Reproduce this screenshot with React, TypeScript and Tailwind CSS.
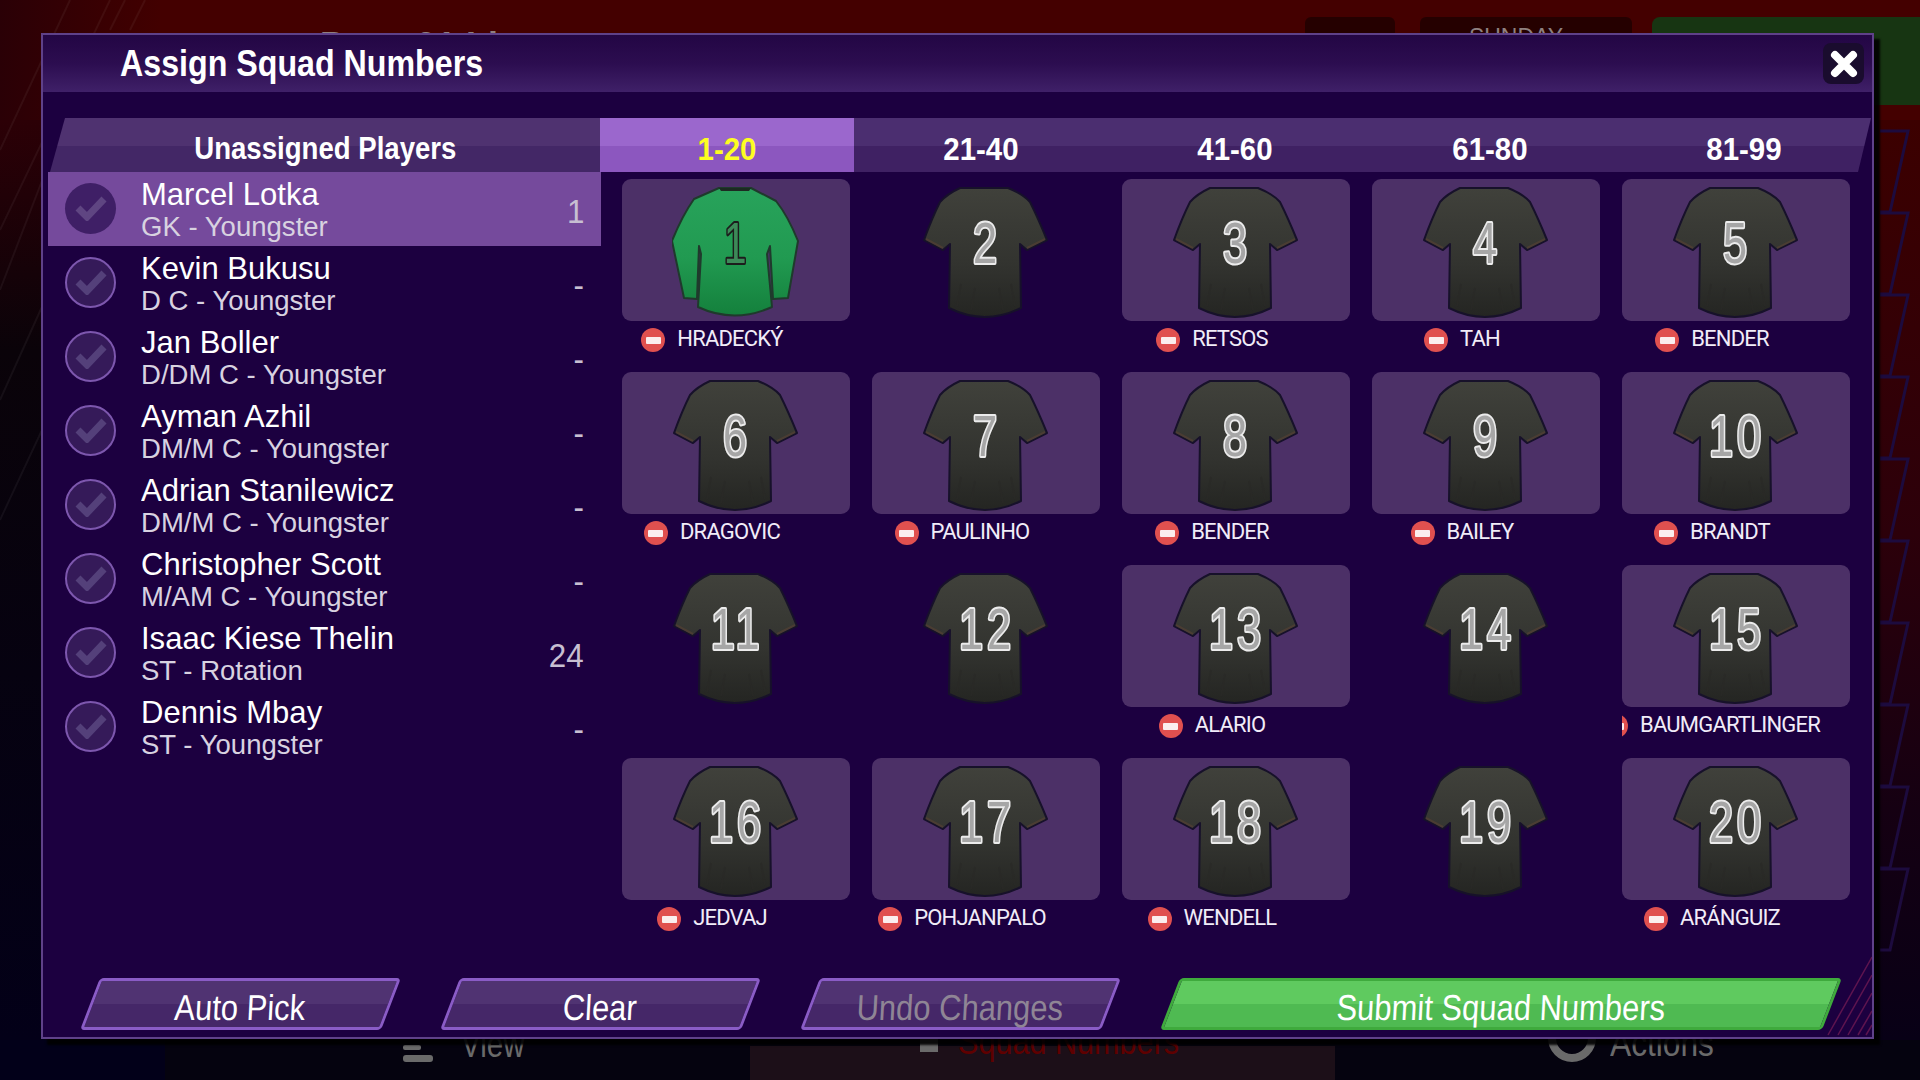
import React from "react";

const players = [
  { name: "Marcel Lotka", sub: "GK - Youngster", num: "1" },
  { name: "Kevin Bukusu", sub: "D C - Youngster", num: "-" },
  { name: "Jan Boller", sub: "D/DM C - Youngster", num: "-" },
  { name: "Ayman Azhil", sub: "DM/M C - Youngster", num: "-" },
  { name: "Adrian Stanilewicz", sub: "DM/M C - Youngster", num: "-" },
  { name: "Christopher Scott", sub: "M/AM C - Youngster", num: "-" },
  { name: "Isaac Kiese Thelin", sub: "ST - Rotation", num: "24" },
  { name: "Dennis Mbay", sub: "ST - Youngster", num: "-" },
];

const shirts: { n: number; who?: string }[] = [
  { n: 1, who: "HRADECKÝ" },
  { n: 2 },
  { n: 3, who: "RETSOS" },
  { n: 4, who: "TAH" },
  { n: 5, who: "BENDER" },
  { n: 6, who: "DRAGOVIC" },
  { n: 7, who: "PAULINHO" },
  { n: 8, who: "BENDER" },
  { n: 9, who: "BAILEY" },
  { n: 10, who: "BRANDT" },
  { n: 11 },
  { n: 12 },
  { n: 13, who: "ALARIO" },
  { n: 14 },
  { n: 15, who: "BAUMGARTLINGER" },
  { n: 16, who: "JEDVAJ" },
  { n: 17, who: "POHJANPALO" },
  { n: 18, who: "WENDELL" },
  { n: 19 },
  { n: 20, who: "ARÁNGUIZ" },
];

function Jersey({ n }: { n: number }) {
  const gk = n === 1;
  const id = gk ? "gkfill" : "shirtfill";
  const path = gk
    ? "M47 2 L79 2 L104 15 Q116 30 126 55 L116 112 L101 113 L98 60 L95 68 L100 121 Q62 138 26 121 L29 68 L27 60 L25 113 L12 112 L0 55 Q10 30 22 13 Z"
    : "M38 2 L86 2 Q101 8 108 16 Q116 32 125 54 L105 64 L98 58 L99 122 Q63 140 27 122 L28 58 L21 64 L2 54 Q10 32 18 16 Q25 8 38 2 Z";
  return (
    <svg width="128" height="134" viewBox="0 0 128 134" className="block">
      <defs>
        <linearGradient id={id} x1="0" y1="0" x2="0" y2="1">
          {gk ? <stop offset="0" stopColor="#28a35b" /> : <stop offset="0" stopColor="#40413b" />}
          {gk ? <stop offset="0.55" stopColor="#219a51" /> : <stop offset="0.6" stopColor="#32332f" />}
          {gk ? <stop offset="1" stopColor="#14803c" /> : <stop offset="1" stopColor="#242522" />}
        </linearGradient>
      </defs>
      <path d={path} fill={`url(#${id})`} stroke={gk ? "#1f3a2c" : "#17112a"} strokeWidth="2" strokeLinejoin="round" />
      {gk ? (
        <path d="M47 2 L79 2 L77 5 L49 5 Z" fill="#1d2a22" />
      ) : (
        <g fill="none" strokeWidth="2">
          <path d="M105 62 L123 53" stroke="#4a3d33" />
          <path d="M21 62 L4 53" stroke="#4a3d33" />
          <path d="M39 98 L35 120 M53 102 L49 124 M77 102 L81 124 M89 98 L93 120" stroke="#2a2a27" strokeOpacity="0.7" />
        </g>
      )}
      <text
        x="0"
        y="0"
        textAnchor="middle"
        transform={gk ? "translate(65 77) scale(0.72 1)" : "translate(65 77) scale(0.76 1)"}
        letterSpacing="5"
        fontFamily="Liberation Sans, sans-serif"
        fontSize="57"
        fill={gk ? "#3c8a58" : "#a6a6a6"}
        stroke={gk ? "#1c1c1c" : "#ececec"}
        strokeWidth="4"
        strokeLinejoin="round"
        paintOrder="stroke"
      >
        {n}
      </text>
    </svg>
  );
}

function Shirt({ n, who }: { n: number; who?: string }) {
  return (
    <div className="w-[228px] h-[193px]">
      <div className={`h-[142px] rounded-[9px] flex justify-center pt-[7px] ${who ? "bg-[#4c3067]" : ""}`}>
        <Jersey n={n} />
      </div>
      {who && (
        <div className="h-[36px] overflow-hidden flex justify-center items-center pr-[12px]">
          <div className="relative">
            <span className="absolute right-full mr-[12px] top-[3px] w-[24px] h-[24px] rounded-full bg-[#e0504f] flex items-center justify-center">
              <span className="w-[15px] h-[7px] rounded-[1px] bg-[#fbeeee]" />
            </span>
            <span className="block text-[22px] leading-[28px] tracking-[-0.8px] text-[#f1ecf8] [font-family:Roboto,sans-serif] whitespace-nowrap">{who}</span>
          </div>
        </div>
      )}
    </div>
  );
}

function PlayerRow({ name, sub, num, active }: { name: string; sub: string; num: string; active: boolean }) {
  return (
    <div className={`h-[74px] pl-[17px] pr-[17px] flex items-center ${active ? "bg-[#754a9c]" : ""}`}>
      <span
        className={`w-[51px] h-[51px] -mt-[2px] rounded-full flex items-center justify-center shrink-0 ${
          active ? "bg-[#3f1f66]" : "bg-[#351a59] border-2 border-[#7d57ae]"
        }`}
      >
        <svg width="32" height="26" viewBox="0 0 32 26" fill="none">
          <path d="M3 13 L12 22 L29 4" stroke={active ? "#5f4582" : "#54407a"} strokeWidth="7" />
        </svg>
      </span>
      <div className="ml-[25px] flex-1 pt-[2px]">
        <div className="text-[32px] leading-[34px] text-white origin-left scale-x-[0.97] whitespace-nowrap">{name}</div>
        <div className="text-[27px] leading-[33px] text-[#d8d2e0] origin-left scale-x-[1.02] whitespace-nowrap">{sub}</div>
      </div>
      <div className="text-[33px] text-[#c7bfd2] origin-right scale-x-[0.95] mt-[6px]">{num}</div>
    </div>
  );
}

function Btn({ label, w, kind }: { label: string; w: string; kind: "plain" | "off" | "go" }) {
  const skin =
    kind === "go"
      ? "border-[#3faa3d] bg-[linear-gradient(#5fca5f_50%,#4fba52_50%)]"
      : "border-[#8a5cc6] bg-[linear-gradient(#503372_50%,#452768_50%)]";
  return (
    <div className={`h-[52px] ${w} -skew-x-[21deg] rounded-[4px] border-[3px] ${skin} flex items-center justify-center shrink-0`}>
      <span className={`skew-x-[21deg] scale-x-[0.86] text-[36px] leading-[45px] pt-[7px] whitespace-nowrap ${kind === "off" ? "text-[#8f8595]" : "text-white"}`}>
        {label}
      </span>
    </div>
  );
}

export default function App() {
  return (
    <div className="relative w-[1920px] h-[1080px] overflow-hidden bg-[#24000c] [font-family:'Liberation_Sans',sans-serif]">
      {/* page behind the dialog */}
      <div className="h-full flex flex-col">
        <div className="h-[120px] bg-[#440000] flex shrink-0 relative">
          <div className="w-[160px] bg-[linear-gradient(90deg,#2a0006,#420000)]" />
          <div className="pt-[19px] pl-[160px] w-[1145px] text-[36px] text-[#8f8080] font-bold whitespace-nowrap">Page 01 Lineup</div>
          <div className="mt-[17px] h-[60px] w-[90px] bg-[#250000] rounded-[6px]" />
          <div className="mt-[17px] ml-[25px] h-[60px] w-[212px] pr-[20px] bg-[#250000] rounded-[6px] text-center text-[23px] leading-[40px] text-[#8f8080]">SUNDAY</div>
          <div className="mt-[17px] ml-[20px] h-[88px] flex-1 bg-[#173512] rounded-tl-[8px]" />
        </div>
        <div className="flex-1 bg-[linear-gradient(#3c0000,#2c000a_45%,#150012_75%,#080016)]" />
        <div className="h-[40px] shrink-0 flex bg-[#05030f] text-[36px] leading-[40px] text-[#6a6a6a]">
          <div className="w-[165px] bg-[#020019]" />
          <div className="w-[585px] relative">
            <div className="absolute left-[238px] top-[5px] flex flex-col gap-[5px] items-start">
              <span className="w-[18px] h-[5px] rounded-[2px] bg-[#6a6a6a]" />
              <span className="w-[30px] h-[7px] rounded-[3px] bg-[#6a6a6a]" />
            </div>
            <span className="absolute left-[296px] top-[-15px] origin-left scale-x-[0.82]">View</span>
          </div>
          <div className="w-[585px] mt-[6px] bg-[#1c0f18] relative">
            <span className="absolute left-[170px] top-[-12px] w-[18px] h-[18px] bg-[#6a6a6a]" />
            <span className="absolute left-[208px] top-[-24px] origin-left scale-x-[0.85] text-[#5f0000] whitespace-nowrap">Squad Numbers</span>
          </div>
          <div className="flex-1 relative">
            <span className="absolute left-[213px] top-[-26px] w-[48px] h-[48px] rounded-full border-[8px] border-[#6a6a6a]" />
            <span className="absolute left-[275px] top-[-16px] origin-left scale-x-[0.88]">Actions</span>
          </div>
        </div>
      </div>

      {/* background line art */}
      <div className="absolute left-0 top-[120px] w-[45px] h-[920px] bg-[linear-gradient(#2c0006,#0a0309_25%,#060210_60%,#030018)]" />
      <svg className="absolute left-0 top-0" width="165" height="560" viewBox="0 0 165 560" fill="none">
        <g stroke="#ffffff" strokeOpacity="0.05" strokeWidth="2">
          <path d="M0 150 L70 0 M0 230 L110 0 M0 290 L50 160 M0 400 L45 300 M0 520 L42 430 M110 30 L125 0 M130 30 L145 0" />
        </g>
      </svg>
      <svg className="absolute left-[1880px] top-[120px]" width="40" height="840" viewBox="0 0 40 840" fill="none">
        <g stroke="#1d0b3e" strokeWidth="3">
          {Array.from({ length: 10 }).map((_, i) => (
            <path key={i} d={`M0 ${11 + i * 82} L28 ${11 + i * 82} L10 ${92 + i * 82} L0 ${92 + i * 82}`} />
          ))}
        </g>
      </svg>

      {/* dialog */}
      <div className="absolute left-[41px] top-[33px] w-[1833px] h-[1006px] border-2 border-[#5f4189] bg-[#1c0040] shadow-[6px_6px_2px_rgba(0,0,0,0.9)] flex flex-col overflow-hidden">
        <div className="h-[57px] shrink-0 bg-[linear-gradient(#230644,#2c0d50_50%,#3f2068)] flex items-center justify-between pl-[77px] pr-[8px]">
          <span className="text-[37px] font-bold text-white origin-left scale-x-[0.87] whitespace-nowrap pt-[1px]">Assign Squad Numbers</span>
          <span className="w-[41px] h-[41px] rounded-[8px] bg-[#1a0c2e] flex items-center justify-center">
            <svg width="30" height="30" viewBox="0 0 30 30">
              <path d="M6 6 L24 24 M24 6 L6 24" stroke="#ffffff" strokeWidth="8" strokeLinecap="round" />
            </svg>
          </span>
        </div>

        <div className="ml-[7px] mr-[1px] mt-[26px] h-[54px] shrink-0 flex text-[32px] font-bold text-white [clip-path:polygon(15px_0,100%_0,calc(100%-13px)_100%,0_100%)]">
          <div className="w-[550px] bg-[linear-gradient(#4f3270_52%,#432766_52%)] flex items-center justify-center pt-[9px]">
            <span className="text-[31px] scale-x-[0.89] whitespace-nowrap">Unassigned Players</span>
          </div>
          <div className="w-[254px] bg-[linear-gradient(#9b67cd_52%,#8c57bf_52%)] text-[#fdfd22] flex items-center justify-center pt-[7px]">
            <span className="scale-x-[0.92]">1-20</span>
          </div>
          {["21-40", "41-60", "61-80", "81-99"].map((t) => (
            <div key={t} className="flex-1 bg-[linear-gradient(#4b2e70_52%,#3f2163_52%)] flex items-center justify-center pt-[7px]">
              <span className="scale-x-[0.92]">{t}</span>
            </div>
          ))}
        </div>

        <div className="flex flex-1 min-h-0">
          <div className="ml-[5px] w-[553px] shrink-0">
            {players.map((p, i) => (
              <PlayerRow key={p.name} {...p} active={i === 0} />
            ))}
          </div>
          <div className="ml-[21px] mt-[7px] grid grid-cols-[repeat(5,228px)] gap-x-[22px] auto-rows-[193px]">
            {shirts.map((s) => (
              <Shirt key={s.n} n={s.n} who={s.who} />
            ))}
          </div>
        </div>

        <div className="flex gap-[59px] pl-[47px] pb-[7px] shrink-0">
          <Btn label="Auto Pick" w="w-[301px]" kind="plain" />
          <Btn label="Clear" w="w-[301px]" kind="plain" />
          <Btn label="Undo Changes" w="w-[301px]" kind="off" />
          <Btn label="Submit Squad Numbers" w="w-[662px]" kind="go" />
        </div>

        <svg className="absolute right-0 bottom-0" width="50" height="110" viewBox="0 0 50 110" fill="none">
          <g stroke="#7a1d56" strokeOpacity="0.7" strokeWidth="1.5">
            <path d="M6 108 L50 30 M16 108 L50 48 M26 108 L50 66 M36 108 L50 84 M44 108 L50 98" />
          </g>
        </svg>
      </div>
    </div>
  );
}
